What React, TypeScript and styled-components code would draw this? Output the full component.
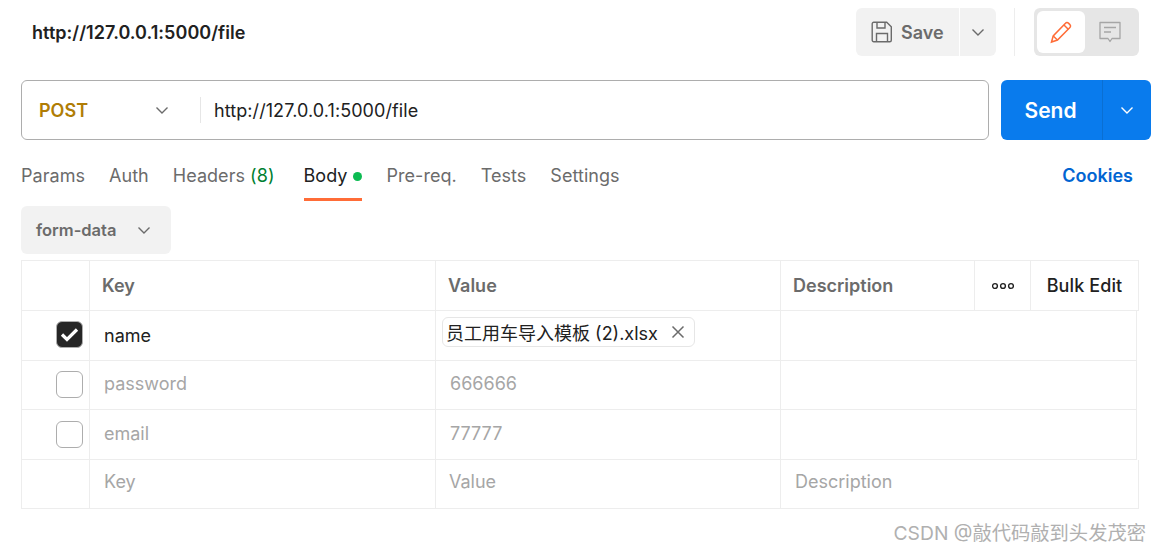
import React from "react";
import styled, { createGlobalStyle } from "styled-components";

const Global = createGlobalStyle`
  html, body { margin: 0; padding: 0; background: #fff; }
  * { box-sizing: border-box; }
`;

const Page = styled.div`
  width: 1161px;
  height: 552px;
  overflow: hidden;
  background: #fff;
  font-family: Inter, "Noto Sans CJK SC", sans-serif;
  font-size: 18px;
  color: #212121;
`;

const Header = styled.div`
  display: flex;
  align-items: center;
  height: 48px;
  margin-top: 8px;
  padding: 0 22px 0 32px;
`;

const Title = styled.div`
  flex: 1;
  font-size: 18px;
  font-weight: 600;
  letter-spacing: 0.04px;
  color: #212121;
`;

const SaveButton = styled.div`
  display: flex;
  align-items: center;
  gap: 8px;
  width: 103px;
  height: 48px;
  padding-left: 15px;
  background: #f2f2f2;
  border-radius: 6px 0 0 6px;
  font-weight: 600;
  color: #6b6b6b;
`;

const SaveCaret = styled.div`
  display: flex;
  align-items: center;
  justify-content: center;
  width: 36px;
  height: 48px;
  margin-left: 1px;
  background: #f2f2f2;
  border-radius: 0 6px 6px 0;
  color: #6b6b6b;
`;

const VLine = styled.div`
  width: 1px;
  height: 48px;
  margin: 0 19px 0 18px;
  background: #ededed;
`;

const Toggle = styled.div`
  display: flex;
  align-items: center;
  width: 105px;
  height: 48px;
  padding: 3px;
  background: #e6e6e6;
  border-radius: 6px;
`;

const ToggleItem = styled.div<{ $active?: boolean }>`
  display: flex;
  align-items: center;
  justify-content: center;
  width: ${(p) => (p.$active ? "48px" : "50px")};
  height: 42px;
  border-radius: 6px;
  background: ${(p) => (p.$active ? "#fff" : "transparent")};
`;

const UrlRow = styled.div`
  display: flex;
  gap: 12px;
  margin-top: 24px;
  padding-left: 21px;
`;

const UrlBox = styled.div`
  display: flex;
  align-items: center;
  width: 968px;
  height: 60px;
  border: 1px solid #adadad;
  border-radius: 6px;
`;

const Method = styled.div`
  display: flex;
  align-items: center;
  justify-content: space-between;
  width: 179px;
  height: 26px;
  padding: 0 30px 0 17px;
  border-right: 1px solid #e6e6e6;
  font-weight: 600;
  color: #b07d05;
`;

const UrlText = styled.div`
  padding-left: 13px;
  letter-spacing: 0.08px;
  color: #212121;
`;

const Send = styled.div`
  display: flex;
  width: 150px;
  height: 60px;
  background: #097bed;
  border-radius: 6px;
  color: #fff;
  font-size: 21px;
  font-weight: 600;
`;

const SendLabel = styled.div`
  display: flex;
  align-items: center;
  justify-content: center;
  width: 102px;
  padding-right: 2px;
  border-right: 1px solid #0a6fd2;
`;

const SendCaret = styled.div`
  flex: 1;
  display: flex;
  align-items: center;
  justify-content: center;
`;

const Tabs = styled.div`
  display: flex;
  align-items: flex-start;
  gap: 24px;
  height: 66px;
  padding: 26px 28px 0 21px;
`;

const Tab = styled.div<{ $active?: boolean; $wide?: boolean }>`
  display: flex;
  align-items: center;
  gap: 6px;
  height: 35px;
  padding-bottom: 12px;
  margin-right: ${(p) => (p.$wide ? "5px" : "0")};
  letter-spacing: 0.04px;
  color: ${(p) => (p.$active ? "#212121" : "#6b6b6b")};
  border-bottom: 3px solid ${(p) => (p.$active ? "#ff6c37" : "transparent")};
  line-height: 22px;
  white-space: nowrap;
`;

const Count = styled.span`
  color: #007f31;
`;

const Dot = styled.span`
  width: 9px;
  height: 9px;
  margin-top: 1px;
  border-radius: 50%;
  background: #0cbb52;
`;

const Cookies = styled.div`
  margin: -1px 0 0 auto;
  line-height: 22px;
  font-weight: 600;
  color: #0265d2;
`;

const Mode = styled.div`
  display: flex;
  align-items: center;
  justify-content: space-between;
  width: 150px;
  height: 48px;
  margin-left: 21px;
  padding: 0 19px 0 15px;
  background: #f2f2f2;
  border-radius: 6px;
  color: #6b6b6b;
  font-weight: 600;
  font-size: 16.5px;
`;

const Table = styled.div`
  width: 1118px;
  height: 249px;
  margin: 6px 0 0 21px;
  border: 1px solid #ededed;
  border-right: 0;
`;

const Row = styled.div<{ $h: number; $last?: boolean; $inset?: boolean }>`
  display: grid;
  grid-template-columns: 68px 346px 345px 194px 56px 1fr;
  height: ${(p) => p.$h}px;
  margin-right: ${(p) => (p.$inset ? "2px" : "0")};
  border-right: 1px solid #ededed;
  border-bottom: ${(p) => (p.$last ? "0" : "1px solid #ededed")};
`;

const Cell = styled.div<{
  $span?: number;
  $tone?: "head" | "dark" | "mute";
  $noLine?: boolean;
  $pad?: number;
  $lift?: number;
}>`
  grid-column: span ${(p) => p.$span ?? 1};
  display: flex;
  align-items: center;
  min-width: 0;
  padding-left: ${(p) => p.$pad ?? 12}px;
  padding-bottom: ${(p) => p.$lift ?? 0}px;
  border-right: ${(p) => (p.$noLine ? "0" : "1px solid #ededed")};
  font-weight: ${(p) => (p.$tone === "head" ? 600 : 400)};
  color: ${(p) => (p.$tone === "head" ? "#6b6b6b" : p.$tone === "mute" ? "#a6a6a6" : "#212121")};
`;

const HeadAction = styled(Cell)`
  justify-content: center;
  padding-left: 0;
  font-weight: 500;
  letter-spacing: 0.1px;
  color: #212121;
`;

const CheckCell = styled.div<{ $lift?: number }>`
  display: flex;
  align-items: center;
  justify-content: center;
  padding-left: 27px;
  padding-bottom: ${(p) => p.$lift ?? 2}px;
  border-right: 1px solid #ededed;
`;

const Check = styled.div<{ $on?: boolean }>`
  display: flex;
  align-items: center;
  justify-content: center;
  width: 27px;
  height: 27px;
  border-radius: 6px;
  border: 1px solid #adadad;
  background: ${(p) => (p.$on ? "#262626" : "#fff")};
`;

const FileChip = styled.div`
  display: flex;
  align-items: center;
  justify-content: space-between;
  width: 253px;
  height: 30px;
  margin: -7px 0 0 -6px;
  padding: 0 9px 0 3px;
  border: 1px solid #e6e6e6;
  border-radius: 6px;
  white-space: nowrap;
`;

const Watermark = styled.div`
  margin-top: 9px;
  padding-right: 15px;
  text-align: right;
  font-size: 19.3px;
  color: #b0b0b0;
  white-space: nowrap;
`;

const Chevron = ({ color = "#6b6b6b", size = 16 }: { color?: string; size?: number }) => (
  <svg width={size} height={size} viewBox="0 0 16 16" fill="none">
    <path d="M2.5 5.5 8 11l5.5-5.5" stroke={color} strokeWidth="1.4" />
  </svg>
);

const rows = [
  { key: "password", value: "666666", h: 49, lift: 2, checkLift: 2 },
  { key: "email", value: "77777", h: 50, lift: 1, checkLift: 1 },
];

export default function App() {
  return (
    <Page>
      <Global />
      <Header>
        <Title>http://127.0.0.1:5000/file</Title>
        <SaveButton>
          <svg width="22" height="22" viewBox="0 0 22 22" fill="none" stroke="#6b6b6b" strokeWidth="1.4">
            <path d="M1.2 2.7a1.5 1.5 0 0 1 1.5-1.5h13l4.6 4.6v13.5a1.5 1.5 0 0 1-1.5 1.5H2.7a1.5 1.5 0 0 1-1.5-1.5z" />
            <path d="M6 1.5v5.5h8V1.5" />
            <path d="M5.5 20.5v-8h11v8" />
          </svg>
          Save
        </SaveButton>
        <SaveCaret>
          <Chevron />
        </SaveCaret>
        <VLine />
        <Toggle>
          <ToggleItem $active>
            <svg width="24" height="24" viewBox="0 0 24 24" fill="none" stroke="#ff6c37" strokeWidth="1.5">
              <path d="M2.5 22l1.7-6L16.5 3.2a2 2 0 0 1 2.9-.1l1.5 1.5a2 2 0 0 1 0 2.9L8.5 20l-6 2z" />
              <path d="M15 5l4.5 4.5" />
              <path d="M4.2 16l4.3 4" />
            </svg>
          </ToggleItem>
          <ToggleItem>
            <svg width="22" height="22" viewBox="0 0 22 22" fill="none" stroke="#a6a6a6" strokeWidth="1.3">
              <path d="M1 1.5h20v16h-8l-2 3-2-3H1z" strokeLinejoin="round" />
              <path d="M5 6.5h12M5 11h7" />
            </svg>
          </ToggleItem>
        </Toggle>
      </Header>
      <UrlRow>
        <UrlBox>
          <Method>
            POST
            <Chevron />
          </Method>
          <UrlText>http://127.0.0.1:5000/file</UrlText>
        </UrlBox>
        <Send>
          <SendLabel>Send</SendLabel>
          <SendCaret>
            <Chevron color="#fff" />
          </SendCaret>
        </Send>
      </UrlRow>
      <Tabs>
        <Tab>Params</Tab>
        <Tab>Auth</Tab>
        <Tab $wide>
          <span>
            Headers <Count>(8)</Count>
          </span>
        </Tab>
        <Tab $active>
          Body
          <Dot />
        </Tab>
        <Tab>Pre-req.</Tab>
        <Tab>Tests</Tab>
        <Tab>Settings</Tab>
        <Cookies>Cookies</Cookies>
      </Tabs>
      <Mode>
        form-data
        <Chevron />
      </Mode>
      <Table>
        <Row $h={50}>
          <CheckCell />
          <Cell $tone="head">Key</Cell>
          <Cell $tone="head">Value</Cell>
          <Cell $tone="head">Description</Cell>
          <HeadAction>
            <svg width="22" height="8" viewBox="0 0 22 8" fill="none" stroke="#212121" strokeWidth="1.4">
              <circle cx="3" cy="4" r="2.4" />
              <circle cx="11" cy="4" r="2.4" />
              <circle cx="19" cy="4" r="2.4" />
            </svg>
          </HeadAction>
          <HeadAction $noLine>Bulk Edit</HeadAction>
        </Row>
        <Row $h={50} $inset>
          <CheckCell>
            <Check $on>
              <svg width="19" height="15" viewBox="0 0 19 15" fill="none" stroke="#fff" strokeWidth="3.2">
                <path d="M2 7.5l5 5L17 2.5" />
              </svg>
            </Check>
          </CheckCell>
          <Cell $pad={14} $lift={1}>name</Cell>
          <Cell>
            <FileChip>
              员工用车导入模板 (2).xlsx
              <svg width="14" height="14" viewBox="0 0 14 14" fill="none" stroke="#6b6b6b" strokeWidth="1.5">
                <path d="M1.5 1.5l11 11M12.5 1.5l-11 11" />
              </svg>
            </FileChip>
          </Cell>
          <Cell $span={3} $noLine />
        </Row>
        {rows.map((r) => (
          <Row $h={r.h} $inset key={r.key}>
            <CheckCell $lift={r.checkLift}>
              <Check />
            </CheckCell>
            <Cell $tone="mute" $pad={14} $lift={r.lift + 1}>{r.key}</Cell>
            <Cell $tone="mute" $pad={14} $lift={r.lift + 1}>{r.value}</Cell>
            <Cell $span={3} $noLine />
          </Row>
        ))}
        <Row $h={48} $last>
          <CheckCell />
          <Cell $tone="mute" $pad={14} $lift={5}>Key</Cell>
          <Cell $tone="mute" $pad={13} $lift={5}>Value</Cell>
          <Cell $tone="mute" $span={3} $noLine $pad={14} $lift={5}>Description</Cell>
        </Row>
      </Table>
      <Watermark>CSDN @敲代码敲到头发茂密</Watermark>
    </Page>
  );
}
